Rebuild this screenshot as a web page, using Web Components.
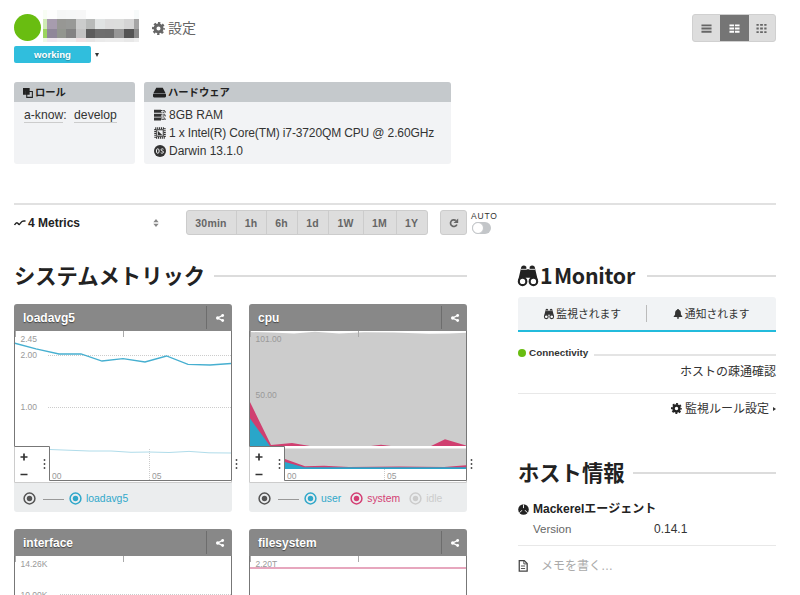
<!DOCTYPE html>
<html lang="ja">

<head>
  <meta charset="UTF-8">
  <meta name="viewport" content="width=device-width, initial-scale=1.0">
  <title>host</title>
  <style>
    body {
      margin: 0;
      background: #fff;
      color: #333;
      font: 12px/18px "Liberation Sans", "Noto Sans CJK JP", sans-serif;
    }
    .page {
      box-sizing: border-box;
      width: 800px;
      height: 595px;
      padding: 14px 24px 0 14px;
      overflow: hidden;
    }
    .cards {
      display: flex;
      gap: 9px;
      height: 82px;
      margin-bottom: 39px;
    }
    .role { width: 121px; font-size: 12.2px; }
    .hardware { width: 307px; }
    .role u {
      text-decoration: none;
      border-bottom: 1px solid #ccc;
    }
    .role u + u { margin-left: 4px; }
    .columns {
      display: grid;
      grid-template-columns: 453px 258px;
      column-gap: 51px;
      margin-top: 25px;
    }
    .graphs {
      display: grid;
      grid-template-columns: 218px 218px;
      gap: 17px;
      margin-top: 14px;
    }
  </style>
</head>

<body>
  <template id="host-header-template">
    <style>
      :host { display: flex; justify-content: space-between; height: 68px; }
      .name { display: flex; align-items: center; height: 27px; }
      .status { width: 27px; height: 27px; border-radius: 50%; background: #69bd11; }
      .mosaic { margin: -4px 0 0 2px; width: 96px; height: 32px; }
      .setting { display: flex; align-items: center; gap: 3px; margin: 1px 0 0 13px; font-size: 14px; color: #666; }
      .state { display: flex; align-items: center; gap: 4px; margin-top: 5px; }
      .badge {
        width: 77px;
        height: 17px;
        border-radius: 2px;
        background: #30bedd;
        color: #fff;
        font: bold 9.6px/18px "Liberation Sans", sans-serif;
        text-align: center;
        text-shadow: 0 1px 1px rgba(0, 0, 0, .25);
      }
      .caret { border: 2.5px solid transparent; border-top: 4px solid #333; border-bottom: 0; }
    </style>
    <div>
      <div class="name">
        <span class="status"></span>
        <svg class="mosaic" viewBox="0 0 96 32" shape-rendering="crispEdges"></svg>
        <span class="setting"><mk-icon name="gear" style="--size: 13px"></mk-icon>設定</span>
      </div>
      <div class="state"><span class="badge">working</span><span class="caret"></span></div>
    </div>
    <slot></slot>
  </template>

  <template id="view-switch-template">
    <style>
      :host { display: flex; box-sizing: border-box; width: 84px; height: 28px; border: 1px solid #d0d0d0; border-radius: 3px; background: #ddd; overflow: hidden; color: #666; }
      span { flex: 1; display: flex; align-items: center; justify-content: center; }
      .on { flex: 0 0 29px; margin: -1px 0; background: #757575; color: #fff; }
      mk-icon { --size: 11px; margin-top: 1px; }
    </style>
    <span><mk-icon name="rows"></mk-icon></span>
    <span class="on"><mk-icon name="columns"></mk-icon></span>
    <span><mk-icon name="grid"></mk-icon></span>
  </template>

  <template id="info-card-template">
    <style>
      :host { display: block; border-radius: 3px; background: #f2f3f5; overflow: hidden; }
      header {
        display: flex;
        align-items: center;
        box-sizing: border-box;
        gap: 2px;
        height: 20px;
        padding: 1px 0 0 9px;
        background: #c5c9cc;
        color: #222;
        font-size: 10.3px;
        font-weight: bold;
      }
      .body { padding: 4px 10px; white-space: nowrap; }
    </style>
    <header><slot name="title"></slot></header>
    <div class="body"><slot></slot></div>
  </template>

  <template id="spec-line-template">
    <style>
      :host { display: flex; align-items: center; gap: 3px; height: 18px; }
    </style>
    <mk-icon></mk-icon><span><slot></slot></span>
  </template>

  <template id="metric-toolbar-template">
    <style>
      :host { display: flex; border-top: 2px solid #e1e1e1; padding-top: 5px; height: 25px; }
      .select { display: flex; align-items: center; width: 172px; margin-top: 1px; font-weight: bold; color: #222; }
      .select span { flex: 1; margin-left: 2px; }
      .select .sort { margin-right: 26px; color: #888; }
      .range, .reload {
        display: flex;
        box-sizing: border-box;
        height: 25px;
        border: 1px solid #ccc;
        border-radius: 3px;
        background: #ddd;
        color: #666;
        font: bold 10.5px/24px "Liberation Sans", sans-serif;
        letter-spacing: .2px;
        text-align: center;
      }
      .range { width: 242px; margin-left: -.5px; }
      .range b { box-sizing: border-box; border-left: 1px solid #ccc; }
      .range b:first-child { border: 0; }
      .reload { width: 27px; margin: 0 4px 0 12.5px; align-items: center; justify-content: center; }
      .auto { padding-top: 1px; font-size: 8.5px; line-height: 10px; letter-spacing: .8px; color: #333; }
      .toggle { display: block; width: 19px; height: 12px; margin: 1px 0 0 1px; border-radius: 6px; background: #c3c6c9; }
      .toggle i { display: block; box-sizing: border-box; width: 12px; height: 12px; border: 1px solid #c3c6c9; border-radius: 50%; background: #fff; }
    </style>
    <div class="select">
      <mk-icon name="trend" style="--size: 12px"></mk-icon>
      <span>4 Metrics</span>
      <mk-icon class="sort" name="sort" style="--size: 8px"></mk-icon>
    </div>
    <div class="range">
      <b style="width: 49px">30min</b><b style="width: 30px">1h</b><b style="width: 31px">6h</b><b style="width: 31px">1d</b><b style="width: 35px">1W</b><b style="width: 33px">1M</b><b style="width: 31px">1Y</b>
    </div>
    <div class="reload"><mk-icon name="reload" style="--size: 10px"></mk-icon></div>
    <div class="auto">AUTO<span class="toggle"><i></i></span></div>
  </template>

  <template id="section-title-template">
    <style>
      :host {
        display: flex;
        align-items: center;
        height: 30px;
        color: #222;
        font: bold 21.3px/30px "Noto Sans CJK JP", sans-serif;
        white-space: nowrap;
      }
      hr { flex: 1; height: 2px; margin: 2px 0 0 var(--gap, 9px); border: 0; background: #dcdcdc; }
    </style>
    <slot></slot>
    <hr>
  </template>

  <template id="metric-graph-template">
    <style>
      :host { display: block; height: 208px; }
      :host([cut]) { height: 66px; overflow: hidden; }
      :host([cut]) footer { display: none; }
      header {
        display: flex;
        align-items: center;
        height: 27px;
        border-radius: 3px 3px 0 0;
        background: #888;
        color: #fff;
        font-size: 12px;
        font-weight: bold;
      }
      .title { flex: 1; padding-left: 9px; text-shadow: 0 1px 1px rgba(0, 0, 0, .5); }
      .share { display: flex; align-items: center; justify-content: center; width: 25px; height: 23px; border-left: 1px solid #6d6d6d; }
      .chart { display: block; width: 218px; height: 152px; overflow: visible; }
      :host([cut]) .chart { height: 39px; overflow: hidden; }
      text { font-size: 8.5px; fill: #999; }
      footer {
        display: flex;
        align-items: center;
        box-sizing: border-box;
        height: 29px;
        padding: 1px 0 0 9px;
        border-radius: 0 0 3px 3px;
        background: #ebedee;
        color: #555;
      }
      footer hr { width: 21px; height: 1px; margin: 2px 5px 0 7px; border: 0; background: #999; }
    </style>
    <header><span class="title"></span><span class="share"><mk-icon name="share" style="--size: 8px"></mk-icon></span></header>
    <svg class="chart"></svg>
    <footer><mk-icon name="radio" style="--size: 13px"></mk-icon><hr><slot></slot></footer>
  </template>

  <template id="legend-item-template">
    <style>
      :host { display: flex; align-items: center; gap: 4px; margin-right: 9px; font-size: 10.4px; }
      span { margin-top: 2px; }
    </style>
    <mk-icon name="radio" style="--size: 13px"></mk-icon><span><slot></slot></span>
  </template>

  <template id="monitor-panel-template">
    <style>
      :host { display: block; }
      .tabs { display: flex; align-items: center; height: 33px; margin-top: 7px; border-bottom: 2px solid #23bbdc; border-radius: 3px 3px 0 0; background: #f1f3f5; font-size: 10.8px; }
      .tabs span { flex: 1; display: flex; align-items: center; justify-content: center; gap: 2px; }
      .tabs i { width: 1px; height: 17px; margin-left: -2px; background: #bbb; }
      .check { display: flex; align-items: center; height: 14px; margin-top: 14px; font-size: 9.9px; font-weight: bold; }
      .dot { width: 8px; height: 8px; margin-right: 3px; border-radius: 50%; background: #69bd11; }
      .check hr { flex: 1; height: 2px; margin: 3px 0 0 6px; border: 0; background: #e4e4e4; }
      .desc { box-sizing: border-box; height: 34px; padding-top: 3px; border-bottom: 1px solid #e8e8e8; line-height: 19px; text-align: right; }
      .rules { display: flex; align-items: center; justify-content: flex-end; height: 29px; }
      .rules mk-icon { margin-right: 3px; color: #222; }
      .arrow { margin-left: 4px; border: 2px solid transparent; border-left: 3px solid #333; border-right: 0; }
    </style>
    <section-title style="--gap: 12px; letter-spacing: -.25px; word-spacing: -3px"><mk-icon name="binoculars" style="--size: 20px; margin: 2px 2px 0 0"></mk-icon>1 Monitor</section-title>
    <div class="tabs">
      <span><mk-icon name="binoculars" style="--size: 10px"></mk-icon>監視されます</span><i></i><span><mk-icon name="bell" style="--size: 10px"></mk-icon>通知されます</span>
    </div>
    <div class="check"><span class="dot"></span>Connectivity<hr></div>
    <div class="desc">ホストの疎通確認</div>
    <div class="rules"><mk-icon name="gear" style="--size: 11px"></mk-icon>監視ルール設定<span class="arrow"></span></div>
  </template>

  <template id="host-info-template">
    <style>
      :host { display: block; margin-top: 34px; }
      .agent { display: flex; align-items: center; gap: 4px; height: 20px; margin-top: 12px; color: #222; font-weight: bold; }
      .row { display: grid; grid-template-columns: 121px 1fr; box-sizing: border-box; height: 27px; padding: 1px 0 0 15px; border-bottom: 1px solid #e8e8e8; }
      .row span { color: #666; font-size: 11.5px; }
      .memo { display: flex; align-items: center; gap: 13px; height: 39px; color: #aaa; }
      .memo mk-icon { color: #444; }
    </style>
    <section-title style="--gap: 8px">ホスト情報</section-title>
    <div class="agent"><mk-icon name="agent" style="--size: 11px"></mk-icon>Mackerelエージェント</div>
    <div class="row"><span>Version</span>0.14.1</div>
    <div class="memo"><mk-icon name="memo" style="--size: 10px"></mk-icon>メモを書く…</div>
  </template>

  <div class="page">
    <host-header><view-switch></view-switch></host-header>
    <div class="cards">
      <info-card class="role">
        <mk-icon slot="title" name="role" style="--size: 10px"></mk-icon>
        <span slot="title">ロール</span>
        <u>a-know</u>: <u>develop</u>
      </info-card>
      <info-card class="hardware">
        <mk-icon slot="title" name="drive" style="--size: 13px"></mk-icon>
        <span slot="title">ハードウェア</span>
        <spec-line icon="memory">8GB RAM</spec-line>
        <spec-line icon="chip" style="letter-spacing: -.13px">1 x Intel(R) Core(TM) i7-3720QM CPU @ 2.60GHz</spec-line>
        <spec-line icon="os">Darwin 13.1.0</spec-line>
      </info-card>
    </div>
    <metric-toolbar></metric-toolbar>
    <div class="columns">
      <div>
        <section-title>システムメトリック</section-title>
        <div class="graphs">
          <metric-graph name="loadavg5">
            <legend-item style="color: #31a8ca">loadavg5</legend-item>
          </metric-graph>
          <metric-graph name="cpu">
            <legend-item style="color: #31a8ca">user</legend-item>
            <legend-item style="color: #d43f74">system</legend-item>
            <legend-item style="color: #ccc">idle</legend-item>
          </metric-graph>
          <metric-graph name="interface" cut></metric-graph>
          <metric-graph name="filesystem" cut></metric-graph>
        </div>
      </div>
      <div>
        <monitor-panel></monitor-panel>
        <host-info></host-info>
      </div>
    </div>
  </div>

  <script>
    // all icons are drawn on a 24 x 24 canvas
    const icons = {
      gear: '<g fill="none" stroke="currentColor"><circle cx="12" cy="12" r="6.5" stroke-width="5.500"/><circle cx="12" cy="12" r="10" stroke-width="4" stroke-dasharray="4.2 3.654" stroke-dashoffset="2.1"/></g>',
      rows: '<path d="M1 3h22v4H1zM1 10h22v4H1zM1 17h22v4H1z"/>',
      columns: '<path d="M1 3h10v4H1zM13 3h10v4H13zM1 10h10v4H1zM13 10h10v4H13zM1 17h10v4H1zM13 17h10v4H13z"/>',
      grid: '<path d="M1 2h5v4H1zM9 2h6v4H9zM18 2h5v4h-5zM1 10h5v4H1zM9 10h6v4H9zM18 10h5v4h-5zM1 18h5v4H1zM9 18h6v4H9zM18 18h5v4h-5z"/>',
      role: '<path d="M0 0h16v7H7v9H0z"/><path d="M9 8.500h13.500v14H9z" fill="none" stroke="currentColor" stroke-width="2.600"/><path d="M7 7h9v9H7z"/>',
      drive: '<path d="M6 3h12l5 10H1z"/><rect y="14" width="24" height="7" rx="2"/>',
      memory: '<path d="M0 1.500h14v6H0zM0 9.500h14v6H0zM0 17h14v6H0z"/><path d="M14 3h8v3.500h-8M14 10.500h8V14h-8M14 18h8v3h-8" fill="none" stroke="currentColor" stroke-width="2.400" stroke-dasharray="3 1.500"/>',
      chip: '<g fill="none" stroke="currentColor"><rect x="2.500" y="2.500" width="19" height="19" stroke-width="4" stroke-dasharray="2.200 1.600"/><rect x="5.500" y="5.500" width="13" height="13" stroke-width="2"/></g><path d="M8 8l9 8.500H8z"/>',
      os: '<circle cx="12" cy="12" r="12"/><g fill="none" stroke="#f2f3f5" stroke-width="2"><ellipse cx="7.500" cy="12" rx="2.800" ry="4.500"/><path d="M19 8.500c-2-1.500-5-1-5 1.200 0 3 5 1.600 5 4.300 0 2.500-3.500 3-5.500 1.500"/></g>',
      trend: '<path d="M1 16c4-7 6-5 8-2s4-3 7-5 4-1 7-1" fill="none" stroke="currentColor" stroke-width="3"/>',
      sort: '<path d="M12 0l8 10H4zM12 24l8-10H4z"/>',
      reload: '<path d="M19 15.500A8 8 0 1 1 16.500 6" fill="none" stroke="currentColor" stroke-width="4"/><path d="M22 1v11H11z"/>',
      share: '<path d="M20 4L5 12l15 8" fill="none" stroke="currentColor" stroke-width="4"/><circle cx="5" cy="12" r="5"/><circle cx="20" cy="4.500" r="4.200"/><circle cx="20" cy="19.500" r="4.200"/>',
      radio: '<circle cx="12" cy="12" r="10" fill="none" stroke="currentColor" stroke-width="2.800"/><circle cx="12" cy="12" r="5"/>',
      binoculars: '<path d="M4 1q3-3 6 0v3h4V1q3-3 6 0l4 17h-9v-4H9v4H0z"/><g fill="#fff" stroke="currentColor" stroke-width="2.600"><circle cx="5.500" cy="18.500" r="4.500"/><circle cx="18.500" cy="18.500" r="4.500"/></g><path d="M3.500 4h7M13.500 4h7" stroke="#fff" stroke-width="1"/>',
      bell: '<path d="M12 0c2 0 2 1 2 2 5 1.500 5 6 5 11l4 6H1l4-6c0-5 0-9.500 5-11 0-1 0-2 2-2zM9 20h6q-1 4-3 4t-3-4z"/>',
      agent: '<circle cx="12" cy="12" r="11.500"/><path d="M12 1v10L3 19M12 11l9 8" fill="none" stroke="#fff" stroke-width="2"/><circle cx="12" cy="12" r="3.500"/>',
      memo: '<path d="M3 -1h12l7 7v18H3z" fill="none" stroke="currentColor" stroke-width="3"/><path d="M14 0v7h7M7 12h10M7 18h10" fill="none" stroke="currentColor" stroke-width="2.200"/>'
    }

    const frame = `
      <path d="M.5 0V115.500H35.500V149.500H217.500V0" fill="none" stroke="#777"/>
      <path d="M1.500 0V6M109.500 0V6" stroke="#aaa"/>`

    const controls = `
      <path d="M.5 116V151.500H217.500V150" fill="none" stroke="#ccc"/>
      <path d="M6.500 126h7M10 122.500v7M6.500 143.500h7" stroke="#333" stroke-width="1.700"/>
      <path d="M30.500 128v10M222.500 128v10" stroke="#555" stroke-width="1.500" stroke-dasharray="2 2"/>
      <text x="38" y="148">00</text><text x="138" y="148">05</text>`

    const dash = 'stroke="#ccc" stroke-dasharray="1 1"'

    const charts = {
      loadavg5: `
        <path d="M34 24.500H217M34 76.500H217M135.500 118V149" ${dash}/>
        <polyline points="0,12 22,17.800 45,23 67,23 88,30 109,27.700 131,31 152.500,25 174,33.300 196,34 217,32.500" fill="none" stroke="#46afd0" stroke-width="1.300"/>
        <polyline points="36,118.500 75,120 97,120 117,121.300 135,121 155,121.500 175,120.400 195,121.800 217,122" fill="none" stroke="#b0dcea"/>
        <text x="6.500" y="10.500">2.45</text><text x="6.500" y="27">2.00</text><text x="6.500" y="78.500">1.00</text>`,
      cpu: `
        <path d="M0 1L22 1.500 45 2.500 66 .8 90 2.500 115 1.200 145 1.500 180 2.800 200 2.500 217 1.800V115H0z" fill="#ccc"/>
        <path d="M0 69L22 114 43 112 61 115H0zM122 115L132 113.800 142 115zM182 115L196 108.300 217 114.500V115z" fill="#d03f70"/>
        <path d="M0 86L21 115H0z" fill="#29a6c9"/>
        <path d="M0 115h35v35H0z" fill="#fff"/>
        <path d="M36 117.500H217V138H36z" fill="#ccc"/>
        <path d="M36 128L56 135.300 75 134.800 100 136 150 135.500 195 136 217 134.300V137H36z" fill="#d03f70"/>
        <path d="M36 131L55 136.300H217V138H36z" fill="#29a6c9"/>
        <path d="M36 116.500H217" stroke="#fff"/>
        <path d="M135.500 138V149" ${dash}/>
        <text x="6.500" y="10.500">101.00</text><text x="6.500" y="67">50.00</text>`,
      interface: `
        <path d="M46 38.500H217" ${dash}/>
        <text x="6.500" y="10.500">14.26K</text><text x="6.500" y="42">10.00K</text>`,
      filesystem: `
        <path d="M1 12H217" stroke="#df8aa9" stroke-width="1.700"/>
        <text x="6.500" y="10.500">2.20T</text>`
    }

    class MkIcon extends HTMLElement {
      constructor() {
        super()
        this.attachShadow({ mode: 'open' })
      }
      static get observedAttributes() {
        return ['name']
      }
      attributeChangedCallback(name, oldValue, newValue) {
        this.shadowRoot.innerHTML = `
          <style>
            :host { display: block; flex: none; width: var(--size, 12px); height: var(--size, 12px); }
            svg { display: block; width: 100%; height: 100%; overflow: visible; fill: currentColor; }
          </style>
          <svg viewBox="0 0 24 24">${icons[newValue] ?? ''}</svg>`
      }
    }
    customElements.define('mk-icon', MkIcon)

    // clones <template id="{tag}-template"> into the shadow root
    class TemplateElement extends HTMLElement {
      constructor() {
        super()
        const template = document.querySelector(`#${this.localName}-template`)
        this.attachShadow({ mode: 'open' }).appendChild(template.content.cloneNode(true))
      }
    }

    class HostHeader extends TemplateElement {
      connectedCallback() {
        const xs = [0, 4, 13.7, 23.3, 33, 42.500, 52, 61.700, 71.300, 81, 90.500, 96]
        const ys = [0, 9, 18.500, 27.500, 32]
        const rows = [
          'f8fdf4 fdfdfd f5f6f6 f6f7f7 f7f7f7 fefefe fefefe fefefe fefefe fefefe f7fafa',
          'cfeab4 a79cae 979794 989997 cbcccc b8bab9 e0e3e3 dcdcdc dcdddc d4d4d4 a5a5a5',
          '9bd45e 8f8799 92968f 838383 c3c3c3 5c5c5c 6e6e6e 6d6d6d 969696 545454 888888',
          'eef8e6 efe8ef f0eef0 eeeeee efe2e4 e6e4e4 eaeaea ececec ececec e8e8e8 eeeeee'
        ]
        let rects = ''
        rows.forEach((row, j) => row.split(' ').forEach((color, i) => {
          rects += `<rect x="${xs[i]}" y="${ys[j]}" width="${xs[i + 1] - xs[i]}" height="${ys[j + 1] - ys[j]}" fill="#${color}"/>`
        }))
        this.shadowRoot.querySelector('.mosaic').innerHTML = rects
      }
    }
    customElements.define('host-header', HostHeader)

    class SpecLine extends TemplateElement {
      connectedCallback() {
        this.shadowRoot.querySelector('mk-icon').setAttribute('name', this.getAttribute('icon'))
      }
    }
    customElements.define('spec-line', SpecLine)

    class MetricGraph extends TemplateElement {
      connectedCallback() {
        const name = this.getAttribute('name')
        const cut = this.hasAttribute('cut')
        this.shadowRoot.querySelector('.title').textContent = name
        this.shadowRoot.querySelector('.chart').innerHTML = charts[name] + frame + (cut ? '' : controls)
      }
    }
    customElements.define('metric-graph', MetricGraph)

    customElements.define('view-switch', class extends TemplateElement {})
    customElements.define('info-card', class extends TemplateElement {})
    customElements.define('metric-toolbar', class extends TemplateElement {})
    customElements.define('section-title', class extends TemplateElement {})
    customElements.define('legend-item', class extends TemplateElement {})
    customElements.define('monitor-panel', class extends TemplateElement {})
    customElements.define('host-info', class extends TemplateElement {})
  </script>
</body>

</html>
